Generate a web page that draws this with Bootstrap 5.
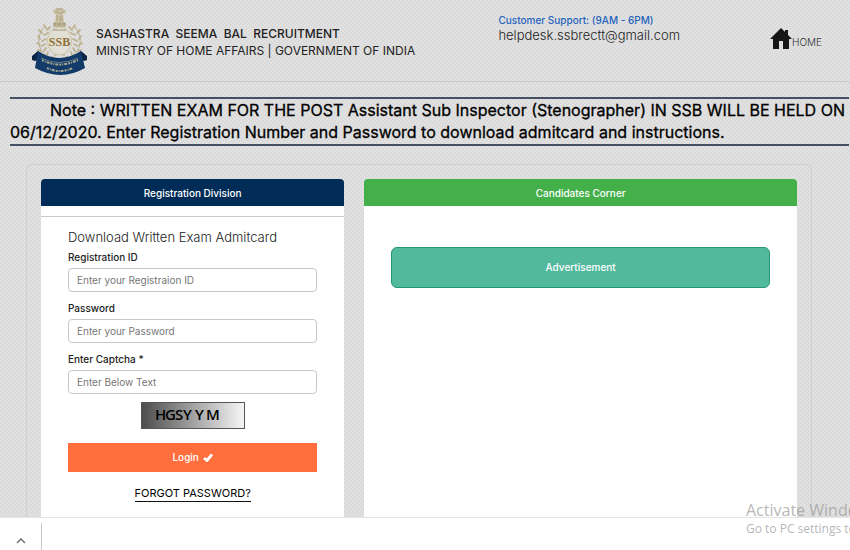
<!DOCTYPE html>
<html lang="en">
<head>
<meta charset="utf-8">
<meta name="viewport" content="width=device-width, initial-scale=1">
<title>Sashastra Seema Bal Recruitment</title>
<link rel="stylesheet" href="https://cdn.jsdelivr.net/npm/bootstrap@5.3.0/dist/css/bootstrap.min.css">
<style>
body{font-family:Inter,"Liberation Sans",sans-serif;font-size:10px;line-height:16px;color:#222;background:#fff}
.page-area{min-height:0;background:conic-gradient(#dadada 25%,#e1e1e1 0 50%,#dadada 0 75%,#e1e1e1 0) 0 0/4px 4px}
.site-head{height:82px;padding:0 28px 0 30px;border-bottom:1px solid #c9c9c9}
.brand-name{font-size:12px;line-height:17px;font-weight:500;color:#222;padding:25px 0 0 5px}
.ministry{font-weight:400}
.support{margin-right:90px;padding-top:12px}
.support-title{font-size:10px;line-height:16px;font-weight:500;color:#2563bd}
.support-mail{font-size:13px;line-height:14px;font-weight:300;color:#222}
.home-link{font-size:10px;font-weight:300;color:#333;padding-top:27px;line-height:13px}
.notice{margin:15px 1px 0 10px;padding:0 0 1px;border-top:2px solid #455064;border-bottom:2px solid #455064;font-size:16px;line-height:22px;font-weight:400;-webkit-text-stroke:.3px #000;text-indent:40px;color:#000}
.panel{margin:18px 38px 0 26px;padding:14px 14px 0;border:1px solid #cfcfcf;border-bottom:0;border-radius:6px 6px 0 0;min-height:0}
.panel .row{--bs-gutter-x:20px}
.block-title{font-size:10px;line-height:16px;font-weight:500;color:#fff;padding:6px;border-radius:4px 4px 0 0;text-align:center;margin:0;height:27px}
.navy{background:#002c57}
.green{background:#44b04a}
.rule{height:11px;border-bottom:1px solid #c9c9c9}
.block-body{padding:12px 27px 0}
.form-title{font-size:13px;line-height:17px;font-weight:300;color:#222;margin:0 0 3px}
.form-label{font-size:10px;line-height:17px;font-weight:500;margin:0 0 2px;color:#222;display:block}
.form-control{font-size:10px;line-height:15px;padding:3px 8px;border-color:#c8c8c8;border-radius:4px;height:24px;min-height:0}
.form-control::placeholder{color:#777}
.field{margin-bottom:8px}
.btn-login{background:#ff6e3c;color:#fff;border:0;border-radius:0;font-size:10px;line-height:17px;font-weight:500;padding:6px;margin-top:14px}
.btn-login:hover{background:#f0602e;color:#fff}
.forgot{font-size:11px;line-height:16px;font-weight:400;color:#000;border-bottom:1px solid #111;margin-top:13px}
.advert{background:#52b99d;border:1px solid #239777;border-radius:6px;color:#fff;font-size:10px;line-height:15px;font-weight:500;padding:12px}
.advert-wrap{padding:41px 27px 0}
.shelf{height:33px;border-top:1px solid #e5e5e5;background:#fff}
.shelf-btn{width:42px;margin-top:5px;border:0;border-right:1px solid #c9c9c9;background:none;padding:7px 0 0}
.watermark{position:absolute;left:calc(100% - 104px);bottom:12px;font-family:"Open Sans","Noto Sans",sans-serif;color:#9b9b9bbb;pointer-events:none}
.watermark-big{font-size:16px;line-height:20px}
.watermark-small{font-size:12px;line-height:18px}
</style>
<script src="https://cdn.jsdelivr.net/npm/bootstrap@5.3.0/dist/js/bootstrap.bundle.min.js"></script>
</head>
<body>
<div class="vh-100 d-flex flex-column position-relative overflow-hidden">
<div class="page-area flex-grow-1 d-flex flex-column overflow-hidden">
  <header class="site-head d-flex align-items-start flex-shrink-0">
    <svg class="flex-shrink-0" width="61" height="78" viewBox="0 0 61 78" role="img" aria-label="SSB emblem">
      <g fill="none" stroke-linecap="round">
        <path d="M14 27C5 37 7 55 24 59M45 27C54 37 52 55 35 59" stroke="#b5aa86" stroke-width="1"/>
        <path d="M16 28l-2-3M17 30l3-3M12 33l-3-3M14 35l4-2M10 39l-2-3M12 41l4-2M10 45l-3-2M12 46l3-2M11 51l-3-1M14 51l2-3M15 55l-3 1M17 55l1-3M21 58l-3 1M43 28l2-3M42 30l-3-3M47 33l3-3M45 35l-4-2M49 39l2-3M47 41l-4-2M49 45l3-2M47 46l-3-2M48 51l3-1M45 51l-2-3M44 55l3 1M42 55l-1-3M38 58l3 1" stroke-width="1.8" stroke="#bdb290"/>
        <path d="M22 57q7 5 15 0M25 55q5-3 9 0" stroke="#b3a67e" stroke-width="1.6"/>
      </g>
      <ellipse cx="29.500" cy="41" rx="12" ry="14" fill="#e2dfd5" stroke="#cbc3a8"/>
      <path d="M25 23l1-9q-4-1-3-4l3-1q3-2 7 0l3 1q1 3-3 4l1 9z" fill="#cbc3a8"/>
      <path d="M26 9h7M25 12h3l2 2 2-2h2M27 15v6M30 16v5M32 15v6" fill="none" stroke="#a39776" stroke-width=".8"/>
      <path d="M24 22h11l1 5H23z" fill="#bcb192"/>
      <path d="M23 24h3M28 24h3M33 24h3M23 30h13" stroke="#968b6c" stroke-width=".9"/>
      <text x="29.500" y="46" text-anchor="middle" font-family="Liberation Serif,serif" font-size="12" font-weight="700" fill="#8e7136">SSB</text>
      <path d="M2 56l6-5 5 4-4 4-4 2-3-1zM57 56l-6-5-5 4 4 4 4 2 3-1z" fill="#0b2445"/>
      <path d="M8 51q21 14 43 0l4 17q-24 14-50 0z" fill="#123b69"/>
      <path d="M12 60q17 9 36 0M17 68q13 6 26 0" fill="none" stroke="#a5a48e" stroke-width="2" stroke-dasharray="2 1 1 1 3 1"/>
      <path d="M11 58q18 9 37 0" fill="none" stroke="#8e9793" stroke-width=".7"/>
    </svg>
    <div class="brand-name text-nowrap"><div>SASHASTRA&nbsp; SEEMA&nbsp; BAL&nbsp; RECRUITMENT</div><div class="ministry">MINISTRY OF HOME AFFAIRS | GOVERNMENT OF INDIA</div></div>
    <div class="support ms-auto text-nowrap"><div class="support-title">Customer Support: (9AM - 6PM)</div><div class="support-mail">helpdesk.ssbrectt@gmail.com</div></div>
    <a class="home-link d-flex align-items-end text-decoration-none" href="#">
      <svg width="22" height="22" viewBox="0 0 22 22" aria-hidden="true"><path d="M0 12L11 1l4 4V3h3v5l4 4h-3v10h-6v-8H9v8H3V12z" fill="#151515"/></svg>HOME</a>
  </header>
  <div class="notice flex-shrink-0">Note : WRITTEN EXAM FOR THE POST Assistant Sub Inspector (Stenographer) IN SSB WILL BE HELD ON 06/12/2020. Enter Registration Number and Password to download admitcard and instructions.</div>
  <main class="panel flex-grow-1">
    <div class="row h-100">
      <section class="col-5">
        <div class="bg-white h-100 rounded-top">
          <h2 class="block-title navy">Registration Division</h2>
          <div class="rule"></div>
          <form class="block-body">
            <h3 class="form-title">Download Written Exam Admitcard</h3>
            <div class="field"><label class="form-label" for="reg">Registration ID</label><input class="form-control" id="reg" type="text" placeholder="Enter your Registraion ID"></div>
            <div class="field"><label class="form-label" for="pwd">Password</label><input class="form-control" id="pwd" type="password" placeholder="Enter your Password"></div>
            <div class="field"><label class="form-label" for="cap">Enter Captcha *</label><input class="form-control" id="cap" type="text" placeholder="Enter Below Text"></div>
            <svg class="d-block mx-auto mt-2" width="104" height="27" viewBox="0 0 104 27" role="img" aria-label="Captcha">
              <defs><linearGradient id="fade"><stop stop-color="#4c4c4c"/><stop offset="1" stop-color="#f7f7f7"/></linearGradient></defs>
              <rect x=".5" y=".5" width="103" height="26" fill="url(#fade)" stroke="#555"/>
              <text x="14 24 34 42 54 65" y="18" font-family="Open Sans,sans-serif" font-size="15" font-weight="600">HGSYYM</text>
            </svg>
            <button class="btn btn-login w-100 d-flex align-items-center justify-content-center" type="submit">Login
              <svg class="ms-1" width="10" height="9" viewBox="0 0 10 9" aria-hidden="true"><path d="M1 5l3 2.500L9 1.500" fill="none" stroke="#fff" stroke-width="2.800"/></svg></button>
            <div class="text-center"><a class="forgot d-inline-block text-decoration-none" href="#">FORGOT PASSWORD?</a></div>
          </form>
        </div>
      </section>
      <section class="col-7">
        <div class="bg-white h-100 rounded-top">
          <h2 class="block-title green">Candidates Corner</h2>
          <div class="advert-wrap"><button class="btn advert w-100" type="button">Advertisement</button></div>
        </div>
      </section>
    </div>
  </main>
</div>
<footer class="shelf d-flex flex-shrink-0">
  <button class="shelf-btn" type="button" aria-label="Show more"><svg width="10" height="6" viewBox="0 0 10 6"><path d="M1 5l4-4 4 4" fill="none" stroke="#777" stroke-width="1.6"/></svg></button>
</footer>
<div class="watermark text-nowrap"><div class="watermark-big">Activate Windows</div><div class="watermark-small">Go to PC settings to activate Windows.</div></div>
</div>
</body>
</html>
